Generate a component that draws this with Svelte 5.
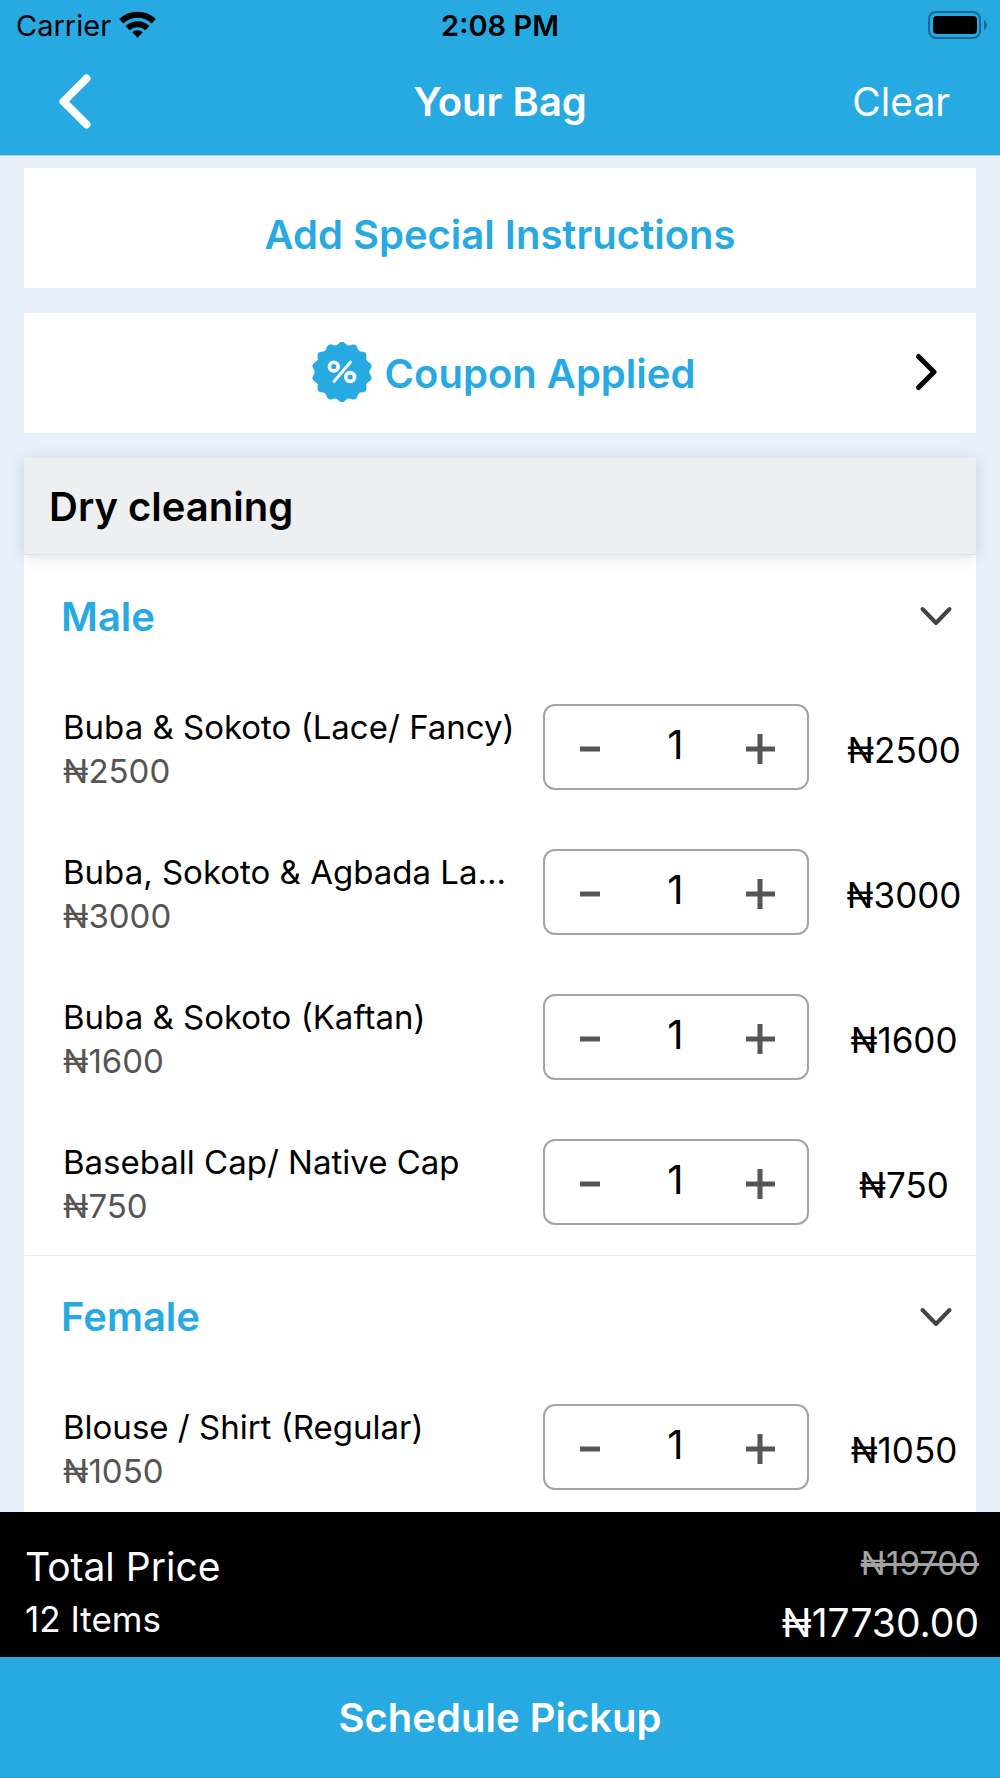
<script>
  let sections = $state([
    {
      name: 'Male',
      open: true,
      items: [
        { name: 'Buba & Sokoto (Lace/ Fancy)', price: 2500, qty: 1 },
        { name: 'Buba, Sokoto & Agbada La...', price: 3000, qty: 1 },
        { name: 'Buba & Sokoto (Kaftan)', price: 1600, qty: 1 },
        { name: 'Baseball Cap/ Native Cap', price: 750, qty: 1 }
      ]
    },
    {
      name: 'Female',
      open: true,
      items: [{ name: 'Blouse / Shirt (Regular)', price: 1050, qty: 1 }]
    }
  ]);

  // Outline of the coupon seal: a circle with fourteen soft scallops.
  const seal =
    'M' +
    Array.from({ length: 168 }, (_, i) => {
      const a = (i / 168) * Math.PI * 2;
      const r = 28.8 + 1.5 * Math.cos(14 * a);
      return `${(31 + r * Math.sin(a)).toFixed(2)} ${(30 - r * Math.cos(a)).toFixed(2)}`;
    }).join('L') +
    'Z';
</script>

<div class="app">
  <header>
    <div class="status">
      <span class="carrier">
        Carrier
        <svg width="37" height="29" viewBox="0 0 37 29" aria-hidden="true">
          <path d="M18.5 26.8 L13.2 21.2 A8 8 0 0 1 23.8 21.2 Z" />
          <path d="M8.6 17.2 A14.2 14.2 0 0 1 28.4 17.2" class="arc" />
          <path d="M2.2 10.2 A23.8 23.8 0 0 1 34.8 10.2" class="arc" />
        </svg>
      </span>
      <span class="time">2:08 PM</span>
      <svg class="battery" width="60" height="28" viewBox="0 0 60 28" aria-hidden="true">
        <rect x="1" y="1" width="51" height="26" rx="7" class="shell" />
        <rect x="5" y="5" width="44" height="18" rx="4" />
        <path d="M56 9 Q59 11 59 14 Q59 17 56 19 Z" class="tip" />
      </svg>
    </div>
    <div class="nav">
      <button class="back" aria-label="Back">
        <svg width="34" height="56" viewBox="0 0 34 56" aria-hidden="true">
          <path d="M28.5 4.5 L5.5 27.5 L28.5 50.5" />
        </svg>
      </button>
      <h1>Your Bag</h1>
      <button class="clear">Clear</button>
    </div>
  </header>

  <main>
    <button class="card instructions">Add Special Instructions</button>

    <button class="card coupon">
      <span class="label">
        <svg width="62" height="62" viewBox="0 0 62 62" aria-hidden="true">
          <path d={seal} fill="#27a9e1" />
          <g fill="none" stroke="#fff" stroke-width="3.6">
            <circle cx="22.8" cy="24.6" r="4.4" />
            <circle cx="39.2" cy="35" r="4.4" />
            <path d="M23 39.5 L39.4 20.2" stroke-linecap="round" stroke-width="3" />
          </g>
        </svg>
        Coupon Applied
      </span>
      <svg class="next" width="24" height="40" viewBox="0 0 24 40" aria-hidden="true">
        <path d="M3.5 3.5 L19 19 L3.5 34.5" />
      </svg>
    </button>

    <section class="group">
      <h2>Dry cleaning</h2>
      {#each sections as section}
        <div class="category">
          <button class="toggle" aria-expanded={section.open} onclick={() => (section.open = !section.open)}>
            {section.name}
            <svg width="34" height="22" viewBox="0 0 34 22" aria-hidden="true">
              <path d="M3.5 4 L17 18 L30.5 4" />
            </svg>
          </button>
          {#if section.open}
            <ul>
              {#each section.items as item}
                <li>
                  <div class="info">
                    <div class="name">{item.name}</div>
                    <div class="unit">₦{item.price}</div>
                  </div>
                  <div class="stepper">
                    <button aria-label="Remove one {item.name}" onclick={() => (item.qty = Math.max(0, item.qty - 1))}>
                      <svg width="30" height="30" viewBox="0 0 30 30" aria-hidden="true"><path d="M5 15 H25" /></svg>
                    </button>
                    <output>{item.qty}</output>
                    <button aria-label="Add one {item.name}" onclick={() => (item.qty += 1)}>
                      <svg width="30" height="30" viewBox="0 0 30 30" aria-hidden="true"><path d="M0 15 H29 M14 0 V30" /></svg>
                    </button>
                  </div>
                  <div class="sum">₦{item.price * item.qty}</div>
                </li>
              {/each}
            </ul>
          {/if}
        </div>
      {/each}
    </section>
  </main>

  <footer>
    <div class="totals">
      <div>
        <div class="big">Total Price</div>
        <div class="count">12 Items</div>
      </div>
      <div class="right">
        <s>₦19700</s>
        <div class="big">₦17730.00</div>
      </div>
    </div>
    <button class="schedule">Schedule Pickup</button>
  </footer>
</div>

<style>
  :global(body) {
    margin: 0;
  }
  .app {
    height: 100vh;
    display: flex;
    flex-direction: column;
    background: #e8f0fb;
    color: #000;
    font-family: Inter, 'Liberation Sans', sans-serif;
    font-size: 40px;
  }
  .app * {
    box-sizing: border-box;
  }
  button {
    margin: 0;
    padding: 0;
    border: 0;
    background: none;
    color: inherit;
    font: inherit;
    cursor: pointer;
  }
  svg {
    display: block;
    flex: none;
  }
  h1,
  h2,
  ul {
    margin: 0;
    padding: 0;
    font-size: 40px;
    font-weight: 600;
    list-style: none;
  }

  header {
    flex: none;
    background: #27a9e1;
    border-bottom: 1px solid #b9cfdc;
  }
  .status,
  .nav {
    display: grid;
    grid-template-columns: 1fr auto 1fr;
    align-items: center;
  }
  .status {
    height: 48px;
    padding: 2px 12px 0;
    font-size: 29px;
  }
  .carrier {
    display: flex;
    align-items: center;
    gap: 8px;
    padding-left: 4px;
  }
  .arc {
    fill: none;
    stroke: #000;
    stroke-width: 6;
  }
  .time {
    font-weight: 600;
  }
  .battery {
    justify-self: end;
  }
  .shell {
    fill: none;
    stroke: #1b6a8d;
    stroke-width: 2;
  }
  .tip {
    fill: #1b6a8d;
  }
  .nav {
    height: 107px;
    padding: 0 50px;
    color: #fff;
  }
  .back {
    justify-self: start;
    padding-left: 8px;
  }
  .back path {
    fill: none;
    stroke: #fff;
    stroke-width: 8;
    stroke-linejoin: round;
    stroke-linecap: round;
  }
  .clear {
    justify-self: end;
    font-size: 39px;
  }

  main {
    flex: 1;
    min-height: 0;
    overflow-y: auto;
    scrollbar-width: none;
    padding: 12px 24px 0;
    display: flex;
    flex-direction: column;
    gap: 25px;
  }
  .card {
    flex: none;
    height: 120px;
    background: #fff;
    color: #27a9e1;
    font-weight: 600;
  }
  .instructions {
    padding-top: 12px;
  }
  .coupon {
    display: grid;
    grid-template-columns: 1fr auto 1fr;
    align-items: center;
    padding: 0 37px;
  }
  .label {
    grid-column: 2;
    display: flex;
    align-items: center;
    gap: 12px;
    padding-left: 6px;
  }
  .next {
    justify-self: end;
  }
  .next path,
  .toggle path {
    fill: none;
    stroke: #000;
    stroke-width: 5;
    stroke-linecap: round;
    stroke-linejoin: round;
  }
  .toggle path {
    stroke: #444;
    stroke-width: 4;
  }

  .group {
    flex: none;
    background: #fff;
  }
  h2 {
    height: 97px;
    padding: 0 25px;
    line-height: 98px;
    background: #eeeff1;
    box-shadow: 0 2px 14px rgba(60, 90, 120, 0.2);
    border-bottom: 1px solid #dfe1e4;
  }
  .toggle {
    width: 100%;
    height: 120px;
    padding: 2px 23px 0 37px;
    display: flex;
    align-items: center;
    justify-content: space-between;
    color: #27a9e1;
    font-weight: 600;
  }
  .category + .category .toggle {
    border-top: 1px solid #ececee;
  }
  li {
    height: 145px;
    padding: 0 0 2px 39px;
    display: grid;
    grid-template-columns: minmax(0, 1fr) 266px 144px;
    column-gap: 23px;
    align-items: center;
    font-weight: 400;
  }
  .info {
    padding-top: 4px;
    font-size: 33px;
    line-height: 44px;
  }
  .name {
    overflow: hidden;
    white-space: nowrap;
    text-overflow: ellipsis;
  }
  .unit {
    color: #555;
  }
  .stepper {
    height: 86px;
    padding: 0 31px 0 30px;
    display: flex;
    align-items: center;
    justify-content: space-between;
    border: 2px solid #a3a3a3;
    border-radius: 12px;
  }
  .stepper button {
    padding-top: 4px;
  }
  .stepper path {
    stroke: #555;
    stroke-width: 5;
  }
  output {
    padding-bottom: 4px;
  }
  .sum {
    padding-top: 6px;
    font-size: 35px;
    text-align: center;
  }

  footer {
    flex: none;
  }
  .totals {
    height: 145px;
    padding: 16px 21px 0 25px;
    display: flex;
    justify-content: space-between;
    align-items: center;
    background: #000;
    color: #fff;
    line-height: 52px;
  }
  .big {
    font-size: 39px;
  }
  .count {
    font-size: 35px;
  }
  .right {
    text-align: right;
    line-height: 60px;
  }
  s {
    display: block;
    font-size: 33px;
    color: #a3a3a3;
  }
  .schedule {
    width: 100%;
    height: 121px;
    background: #27a9e1;
    color: #fff;
    font-weight: 600;
  }
</style>
